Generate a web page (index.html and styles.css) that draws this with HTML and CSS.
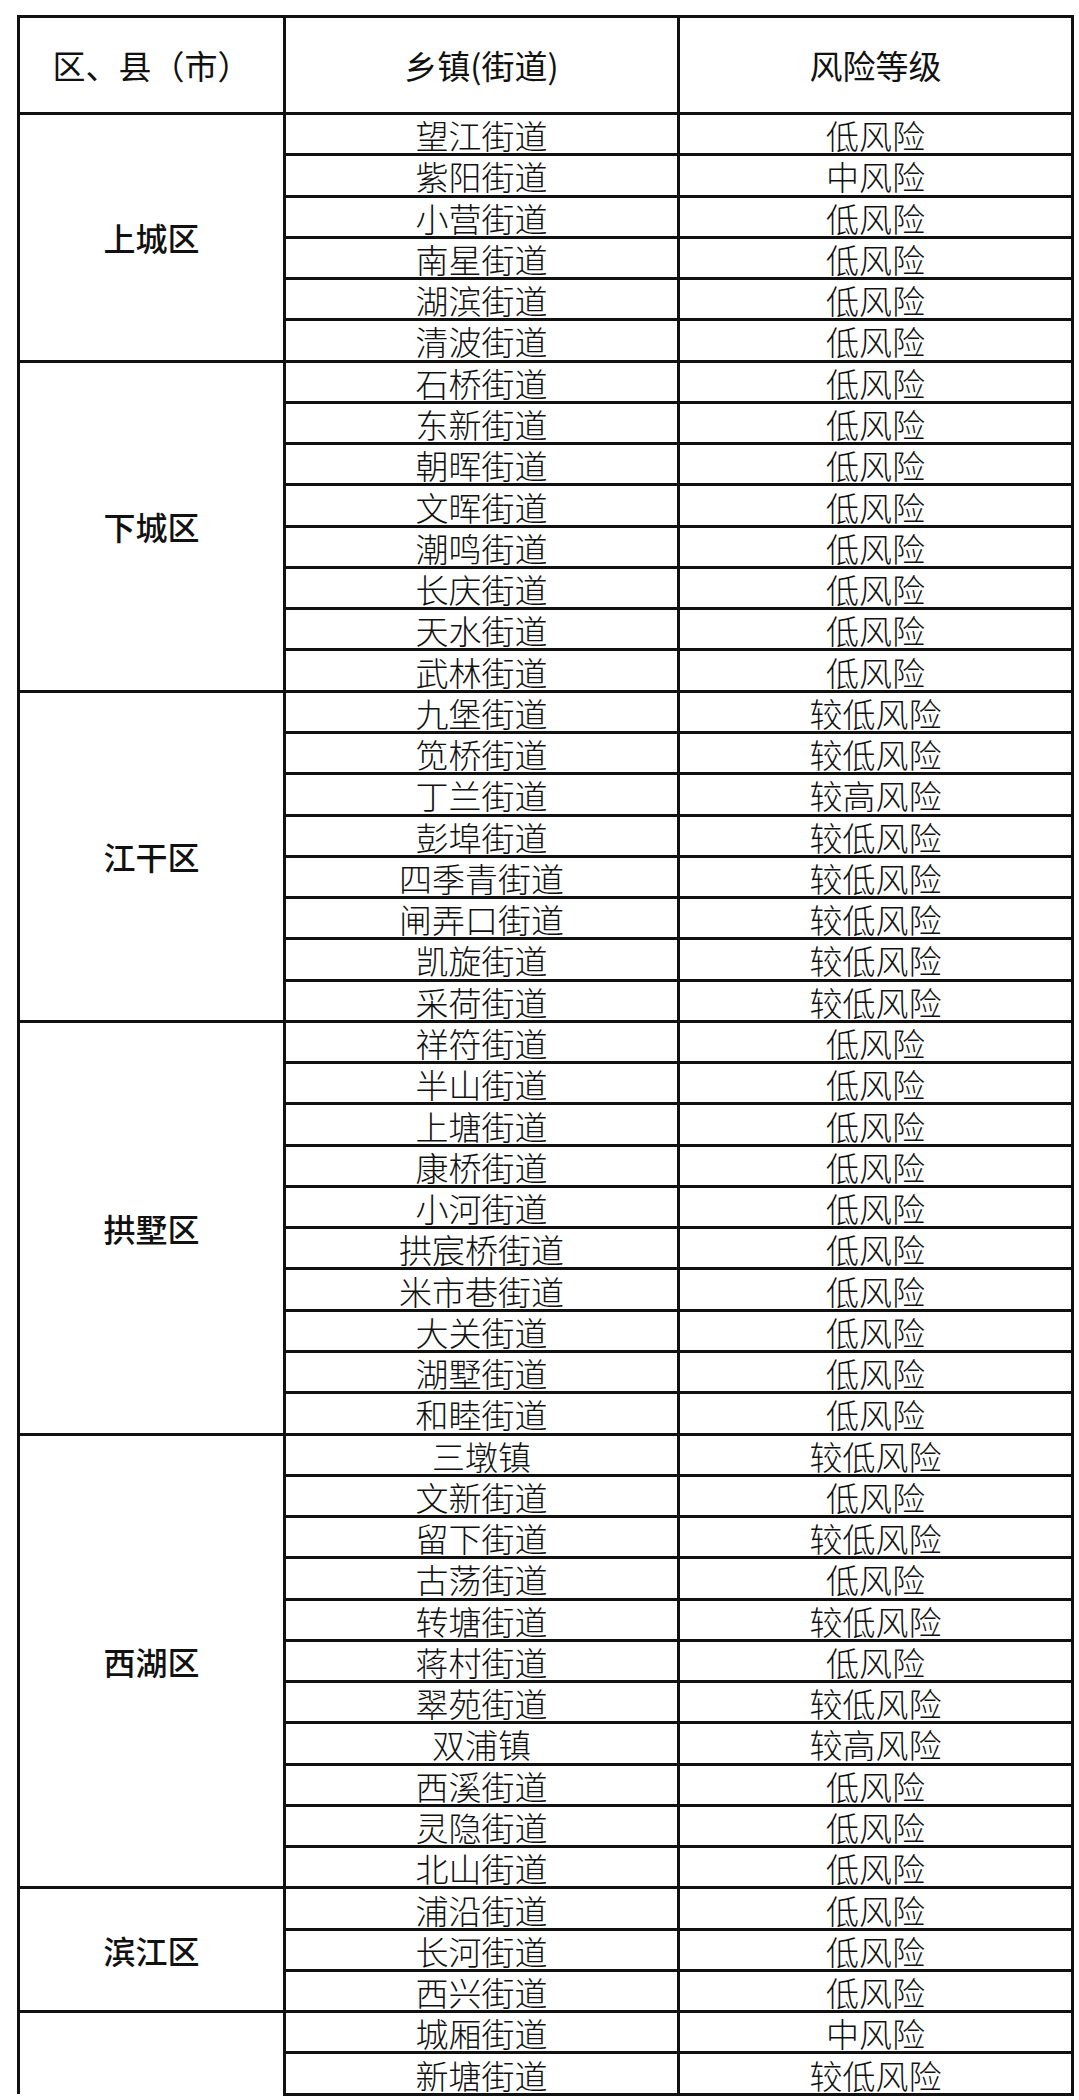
FILE: index.html
```html
<!DOCTYPE html>
<html lang="zh-CN">
<head>
<meta charset="utf-8">
<title>风险等级</title>
<link rel="stylesheet" href="styles.css">
</head>
<body>
<table class="risk">
<colgroup><col class="c1"><col class="c2"><col class="c3"></colgroup>
<thead>
<tr class="head"><th>区、县（市）</th><th>乡镇(街道)</th><th>风险等级</th></tr>
</thead>
<tbody>
<tr><td class="dist" rowspan="6">上城区</td><td>望江街道</td><td>低风险</td></tr>
<tr><td>紫阳街道</td><td>中风险</td></tr>
<tr><td>小营街道</td><td>低风险</td></tr>
<tr><td>南星街道</td><td>低风险</td></tr>
<tr><td>湖滨街道</td><td>低风险</td></tr>
<tr><td>清波街道</td><td>低风险</td></tr>
<tr><td class="dist" rowspan="8">下城区</td><td>石桥街道</td><td>低风险</td></tr>
<tr><td>东新街道</td><td>低风险</td></tr>
<tr><td>朝晖街道</td><td>低风险</td></tr>
<tr><td>文晖街道</td><td>低风险</td></tr>
<tr><td>潮鸣街道</td><td>低风险</td></tr>
<tr><td>长庆街道</td><td>低风险</td></tr>
<tr><td>天水街道</td><td>低风险</td></tr>
<tr><td>武林街道</td><td>低风险</td></tr>
<tr><td class="dist" rowspan="8">江干区</td><td>九堡街道</td><td>较低风险</td></tr>
<tr><td>笕桥街道</td><td>较低风险</td></tr>
<tr><td>丁兰街道</td><td>较高风险</td></tr>
<tr><td>彭埠街道</td><td>较低风险</td></tr>
<tr><td>四季青街道</td><td>较低风险</td></tr>
<tr><td>闸弄口街道</td><td>较低风险</td></tr>
<tr><td>凯旋街道</td><td>较低风险</td></tr>
<tr><td>采荷街道</td><td>较低风险</td></tr>
<tr><td class="dist" rowspan="10">拱墅区</td><td>祥符街道</td><td>低风险</td></tr>
<tr><td>半山街道</td><td>低风险</td></tr>
<tr><td>上塘街道</td><td>低风险</td></tr>
<tr><td>康桥街道</td><td>低风险</td></tr>
<tr><td>小河街道</td><td>低风险</td></tr>
<tr><td>拱宸桥街道</td><td>低风险</td></tr>
<tr><td>米市巷街道</td><td>低风险</td></tr>
<tr><td>大关街道</td><td>低风险</td></tr>
<tr><td>湖墅街道</td><td>低风险</td></tr>
<tr><td>和睦街道</td><td>低风险</td></tr>
<tr><td class="dist" rowspan="11">西湖区</td><td>三墩镇</td><td>较低风险</td></tr>
<tr><td>文新街道</td><td>低风险</td></tr>
<tr><td>留下街道</td><td>较低风险</td></tr>
<tr><td>古荡街道</td><td>低风险</td></tr>
<tr><td>转塘街道</td><td>较低风险</td></tr>
<tr><td>蒋村街道</td><td>低风险</td></tr>
<tr><td>翠苑街道</td><td>较低风险</td></tr>
<tr><td>双浦镇</td><td>较高风险</td></tr>
<tr><td>西溪街道</td><td>低风险</td></tr>
<tr><td>灵隐街道</td><td>低风险</td></tr>
<tr><td>北山街道</td><td>低风险</td></tr>
<tr><td class="dist" rowspan="3">滨江区</td><td>浦沿街道</td><td>低风险</td></tr>
<tr><td>长河街道</td><td>低风险</td></tr>
<tr><td>西兴街道</td><td>低风险</td></tr>
<tr><td class="dist open" rowspan="2"></td><td>城厢街道</td><td>中风险</td></tr>
<tr><td>新塘街道</td><td>较低风险</td></tr>
</tbody>
</table>
</body>
</html>
```
FILE: styles.css
```css
html, body {
  margin: 0;
  padding: 0;
  background: #ffffff;
}
body {
  padding: 15px 0 0 17px;
  font-family: "Noto Sans CJK SC", "Noto Sans", sans-serif;
  color: #111;
}
.risk {
  border-collapse: collapse;
  table-layout: fixed;
  width: 1054px;
}
.c1 { width: 266px; }
.c2 { width: 394px; }
.c3 { width: 394px; }
.risk th,
.risk td {
  border: 3px solid #111;
  padding: 0;
  text-align: center;
  vertical-align: middle;
}
.head th {
  height: 94px;
  font-size: 33px;
  font-weight: 400;
  line-height: 1;
  color: #111;
}
.risk td {
  height: 41.27px;
  font-size: 33px;
  font-weight: 300;
  line-height: 1;
  color: #111;
  padding-top: 3px;
  box-sizing: border-box;
}
.risk td.dist {
  font-size: 32px;
  font-weight: 500;
  color: #111;
  padding-top: 0;
}
.risk td.open {
  border-bottom: none;
}
```
